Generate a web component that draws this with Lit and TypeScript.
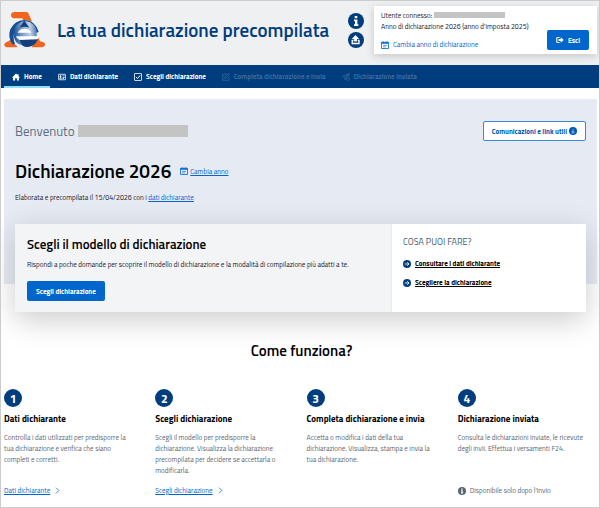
import { LitElement, html, css, svg, nothing } from "lit";
import { customElement } from "lit/decorators.js";
import { classMap } from "lit/directives/class-map.js";

const icon = (content: unknown, cls = "ico") =>
  html`<svg class=${cls} viewBox="0 0 16 16" aria-hidden="true">${content}</svg>`;

const homeIcon = svg`<path d="M8 1 0.500 8.500 2 9.800V15h4.300v-4.500h3.400V15H14V9.800l1.500-1.300L13 6V2h-2v2z" fill="currentColor"/>`;
const idIcon = svg`<rect x="0.800" y="2.500" width="14.400" height="11" rx="1" fill="none" stroke="currentColor" stroke-width="1.600"/><circle cx="5" cy="6.500" r="1.800" fill="currentColor"/><path d="M2.500 11.500c0-4 5-4 5 0zM9 5h4.500v1.500H9zM9 8h4.500v1.500H9zM9 10.700h3v1.300H9z" fill="currentColor"/>`;
const checkIcon = svg`<rect x="1" y="1" width="14" height="14" rx="1" fill="none" stroke="currentColor" stroke-width="1.600"/><path d="m4 8 3 3 5.500-6" fill="none" stroke="currentColor" stroke-width="2"/>`;
const editIcon = svg`<path d="M10 2H1.500v12.500H14V8" fill="none" stroke="currentColor" stroke-width="1.600"/><path d="m5 11 1-3.500L13.500 0.800l1.800 1.800L8.500 10z" fill="none" stroke="currentColor" stroke-width="1.400"/>`;
const sendIcon = svg`<path d="M14.500 1.500 1 6.500l4.500 3zM14.500 1.500 5.500 9.500v4l2.500-2.500" fill="none" stroke="currentColor" stroke-width="1.400"/><path d="M14.500 1.500 13 7" stroke="currentColor" stroke-width="1.400"/><circle cx="12" cy="11.500" r="3.300" fill="none" stroke="currentColor" stroke-width="1.400"/><path d="m10.500 11.500 1.200 1.200 2-2.300" fill="none" stroke="currentColor"/>`;
const calendarIcon = svg`<path d="M1 2.500h14v12.500H1zM4.500 0.500V3M11.500 0.500V3" fill="none" stroke="currentColor" stroke-width="1.600"/><path d="M1 2.500h14v3H1z" fill="currentColor"/><path d="M4 8.800h8M4 11.800h6" stroke="currentColor" stroke-width="1.200"/>`;
const exitIcon = svg`<path d="M7 3H3Q1.500 3 1.500 4.500v7Q1.500 13 3 13h4" fill="none" stroke="currentColor" stroke-width="2.200"/><path d="M5 6h4.500V2.500L15.500 8l-6 5.500V10H5z" fill="currentColor"/>`;
const arrowBadge = svg`<circle cx="8" cy="8" r="8" fill="currentColor"/><path d="M3.500 8h8M8.500 4.500 12 8l-3.500 3.500" fill="none" stroke="#fff" stroke-width="1.700"/>`;
const downBadge = svg`<circle cx="8" cy="8" r="8" fill="currentColor"/><path d="M8 4v7M5 8l3 3 3-3M5 12h6" fill="none" stroke="#b8d4f4" stroke-width="1.300"/>`;
const infoBadge = svg`<circle cx="8" cy="8" r="8" fill="currentColor"/><path d="M6.700 3h2.600v2.300H6.700zM6 6.500h3.400v4.700h1V13H6v-1.800h1V8.300H6z" fill="#fff"/>`;
const uploadBadge = svg`<circle cx="8" cy="8" r="8" fill="currentColor"/><path d="M7.500 3 11.200 7H8.900V9.500H6.100V7H3.800z" fill="#fff"/><path d="M5.500 8.500H4.200v3h6.800v-3H9.700" fill="none" stroke="#fff" stroke-width="1.300"/>`;
const chevron = svg`<path d="m4.500 1.500 6.500 6.500-6.500 6.500" fill="none" stroke="currentColor" stroke-width="1.700"/>`;

const logo = html`<svg class="logo" viewBox="0 0 123 108" role="img" aria-label="Agenzia delle Entrate">
  <defs>
    <linearGradient id="sheen" x1="0" x2="1" y1="0.300" y2="0.200">
      <stop offset="0" stop-color="#1f559b" />
      <stop offset="0.350" stop-color="#7c9fca" />
      <stop offset="0.700" stop-color="#c3d2e6" />
      <stop offset="1" stop-color="#4a77b0" />
    </linearGradient>
  </defs>
  <path d="M31 0H67Q72 0 74 5L84 29H60L55 19H30Q21 18 21 10 21 1 31 0Z" fill="#f0641e" />
  <path d="M14 88Q4 89 1 97 0 105 10 106H38L44 97 24 78Z" fill="#f0641e" />
  <path d="M88 79 84 106H112Q124 104 123 96 122 90 108 88L102 74Z" fill="#f0641e" />
  <circle cx="61" cy="66" r="42" fill="#e8eef6" />
  <path d="M26 98Q10 75 19 52 32 25 61 24 94 25 104 60L98 62Q88 34 61 34 40 35 32 56 25 76 33 95Z" fill="#164e93" />
  <path d="M29 62A34 34 0 0 1 98 62L98 75H38Q42 86 62 86H98Q84 103 58 101 28 96 29 62Z" fill="url(#sheen)" />
  <path d="M61 26 76 47Q60 41 46 47Z" fill="#123f7d" />
  <path d="M41 62Q47 50 61 50 76 50 82 62Z" fill="#fff" />
  <path d="M36 73H104Q105 81 98 83H52Q40 83 36 73Z" fill="#fff" />
  <path d="M47 84 102 82Q92 106 67 105 52 104 47 84Z" fill="#123f7d" />
</svg>`;

const tabs = [
  { label: "Home", icon: homeIcon, active: true, disabled: false },
  { label: "Dati dichiarante", icon: idIcon, active: false, disabled: false },
  { label: "Scegli dichiarazione", icon: checkIcon, active: false, disabled: false },
  { label: "Completa dichiarazione e invia", icon: editIcon, active: false, disabled: true },
  { label: "Dichiarazione inviata", icon: sendIcon, active: false, disabled: true },
];

const steps = [
  {
    title: "Dati dichiarante",
    text: "Controlla i dati utilizzati per predisporre la tua dichiarazione e verifica che siano completi e corretti.",
    link: "Dati dichiarante",
  },
  {
    title: "Scegli dichiarazione",
    text: "Scegli il modello per predisporre la dichiarazione. Visualizza la dichiarazione precompilata per decidere se accettarla o modificarla.",
    link: "Scegli dichiarazione",
  },
  {
    title: "Completa dichiarazione e invia",
    text: "Accetta o modifica i dati della tua dichiarazione. Visualizza, stampa e invia la tua dichiarazione.",
  },
  {
    title: "Dichiarazione inviata",
    text: "Consulta le dichiarazioni inviate, le ricevute degli invii. Effettua i versamenti F24.",
    note: "Disponibile solo dopo l'invio",
  },
];

@customElement("app-root")
export class AppRoot extends LitElement {
  static styles = css`
    :host {
      display: block;
      font: 400 7px/11px "Titillium Web", "Liberation Sans Narrow", Lato, sans-serif;
      color: #17202a;
      background: #fff;
    }
    * { box-sizing: border-box; }
    h1, h2, h3, p, ol, ul { margin: 0; padding: 0; font-weight: inherit; }
    ol, ul { list-style: none; }
    a { color: #0066cc; }
    button { font: inherit; cursor: pointer; }
    svg { flex: none; display: block; }
    .ico { width: 8px; height: 8px; }
    .page { border: 1px solid #ccc; overflow: hidden; }
    header {
      display: flex;
      align-items: flex-start;
      padding: 5px 2px 11px 3px;
      background: #eff0f2;
    }
    .logo { width: 41px; height: 36px; margin-top: 6px; }
    h1 {
      flex: 1;
      margin: 12px 0 0 12px;
      font-size: 19px;
      line-height: 24px;
      font-weight: 600;
      color: #003d7e;
      white-space: nowrap;
    }
    .tools { display: grid; gap: 3px; margin: 7px 10px 0 0; }
    .round { padding: 0; border: 0; border-radius: 50%; background: none; color: #003d7e; }
    .round .ico { width: 16px; height: 16px; }
    .user {
      display: flex;
      justify-content: space-between;
      align-items: flex-end;
      width: 223px;
      height: 48px;
      padding: 4px 8px 4px 7px;
      background: #fff;
      box-shadow: 0 2px 8px rgba(0, 0, 0, 0.18);
      white-space: nowrap;
    }
    .user ul { align-self: flex-start; }
    .who { display: flex; gap: 2px; }
    .redacted { display: inline-block; background: #c4c4c4; }
    .who .redacted { width: 71px; height: 6px; margin-top: 2px; }
    .year { display: flex; align-items: center; gap: 4px; margin-top: 7px; text-decoration: none; }
    .primary {
      display: flex;
      align-items: center;
      gap: 4px;
      height: 20px;
      padding: 0 9px;
      border: 0;
      border-radius: 2px;
      background: #0066cc;
      color: #fff;
      font-weight: 700;
    }
    nav { background: #003d7e; }
    nav ul { display: flex; padding-left: 3px; }
    nav li { display: flex; }
    .tab {
      display: flex;
      align-items: center;
      gap: 4px;
      height: 23px;
      padding: 2px 8px 0 8px;
      border-bottom: 2px solid transparent;
      color: #fff;
      font-weight: 700;
      text-decoration: none;
      white-space: nowrap;
    }
    .active { border-color: #8be3f5; }
    .disabled { color: #37699f; }
    .hero { margin: 11px 2px 0 3px; padding: 22px 11px 0; background: #e6ebf3; height: 185px; }
    .row { display: flex; justify-content: space-between; align-items: center; }
    .welcome { display: flex; align-items: center; gap: 3px; font-size: 13px; line-height: 18px; color: #5c6f82; }
    .welcome .redacted { width: 110px; height: 12px; }
    .outline {
      display: flex;
      align-items: center;
      gap: 2px;
      height: 20px;
      padding: 0 8px;
      border: 1px solid #3b88d8;
      border-radius: 2px;
      background: #fff;
      color: #0059b3;
      font-weight: 700;
    }
    .heading { display: flex; align-items: center; gap: 9px; margin-top: 18px; }
    h2 { font-size: 19px; line-height: 24px; font-weight: 600; color: #000; }
    .change { display: flex; align-items: center; gap: 2px; }
    .lead { margin-top: 9px; }
    .panel {
      display: grid;
      grid-template-columns: 377px 1fr;
      min-height: 88px;
      margin-top: 21px;
      background: #fff;
      box-shadow: 0 8px 28px rgba(0, 0, 0, 0.2);
    }
    .choose { padding: 11px 12px; background: #f3f4f6; border-right: 1px solid #e8eaed; }
    .choose h3 { font-size: 13px; line-height: 18px; color: #000; font-weight: 600; }
    .choose p { margin: 6px 0 11px; }
    .todo { padding: 12px 11px; }
    .todo h3 { font-size: 9px; line-height: 12px; color: #455a6e; }
    .todo li { display: flex; align-items: center; gap: 4px; margin-top: 8px; color: #003d7e; }
    .todo ul { margin-top: 10px; }
    .todo a { color: #000; font-weight: 700; }
    .how { padding: 57px 0 11px 3px; }
    .how > h2 { text-align: center; font-size: 15px; line-height: 20px; }
    .steps { display: grid; grid-template-columns: repeat(4, 1fr); gap: 10px; margin-top: 28px; }
    .step { display: flex; flex-direction: column; }
    .num {
      display: grid;
      place-items: center;
      width: 18px;
      height: 18px;
      border-radius: 50%;
      background: #003d7e;
      color: #fff;
      font-size: 12px;
      font-weight: 700;
    }
    .step h3 { margin: 5px 0 6px; font-size: 9px; line-height: 14px; font-weight: 700; color: #000; white-space: nowrap; }
    .step p { min-height: 44px; padding-right: 11px; color: #5a6772; }
    .foot { display: flex; align-items: center; gap: 4px; margin-top: 9px; color: #5a6772; }
    .foot .chev { width: 7px; height: 7px; color: #0066cc; }
  `;

  render() {
    return html`<div class="page">
      <header>
        ${logo}
        <h1>La tua dichiarazione precompilata</h1>
        <div class="tools">
          <button class="round" aria-label="Informazioni">${icon(infoBadge)}</button>
          <button class="round" aria-label="Carica">${icon(uploadBadge)}</button>
        </div>
        <div class="user">
          <ul>
            <li class="who">Utente connesso: <span class="redacted"></span></li>
            <li>Anno di dichiarazione 2026 (anno d'imposta 2025)</li>
            <li><a class="year" href="#">${icon(calendarIcon)}Cambia anno di dichiarazione</a></li>
          </ul>
          <button class="primary">${icon(exitIcon)}Esci</button>
        </div>
      </header>
      <nav>
        <ul>
          ${tabs.map(
            (t) => html`<li>
              <a
                class=${classMap({ tab: true, active: t.active, disabled: t.disabled })}
                href=${t.disabled ? nothing : "#"}
                aria-current=${t.active ? "page" : nothing}
                aria-disabled=${t.disabled ? "true" : nothing}
                >${icon(t.icon)}${t.label}</a
              >
            </li>`
          )}
        </ul>
      </nav>
      <main>
        <section class="hero">
          <div class="row">
            <p class="welcome">Benvenuto <span class="redacted"></span></p>
            <button class="outline">Comunicazioni e link utili ${icon(downBadge)}</button>
          </div>
          <div class="heading">
            <h2>Dichiarazione 2026</h2>
            <a class="change" href="#">${icon(calendarIcon)}Cambia anno</a>
          </div>
          <p class="lead">Elaborata e precompilata il 15/04/2026 con i <a href="#">dati dichiarante</a></p>
          <div class="panel">
            <div class="choose">
              <h3>Scegli il modello di dichiarazione</h3>
              <p>Rispondi a poche domande per scoprire il modello di dichiarazione e la modalità di compilazione più adatti a te.</p>
              <button class="primary">Scegli dichiarazione</button>
            </div>
            <div class="todo">
              <h3>COSA PUOI FARE?</h3>
              <ul>
                <li>${icon(arrowBadge)}<a href="#">Consultare i dati dichiarante</a></li>
                <li>${icon(arrowBadge)}<a href="#">Scegliere la dichiarazione</a></li>
              </ul>
            </div>
          </div>
        </section>
        <section class="how">
          <h2>Come funziona?</h2>
          <ol class="steps">
            ${steps.map(
              (s, i) => html`<li class="step">
                <span class="num">${i + 1}</span>
                <h3>${s.title}</h3>
                <p>${s.text}</p>
                ${s.link ? html`<div class="foot"><a href="#">${s.link}</a>${icon(chevron, "chev")}</div>` : nothing}
                ${s.note ? html`<div class="foot">${icon(infoBadge)}${s.note}</div>` : nothing}
              </li>`
            )}
          </ol>
        </section>
      </main>
    </div>`;
  }
}
